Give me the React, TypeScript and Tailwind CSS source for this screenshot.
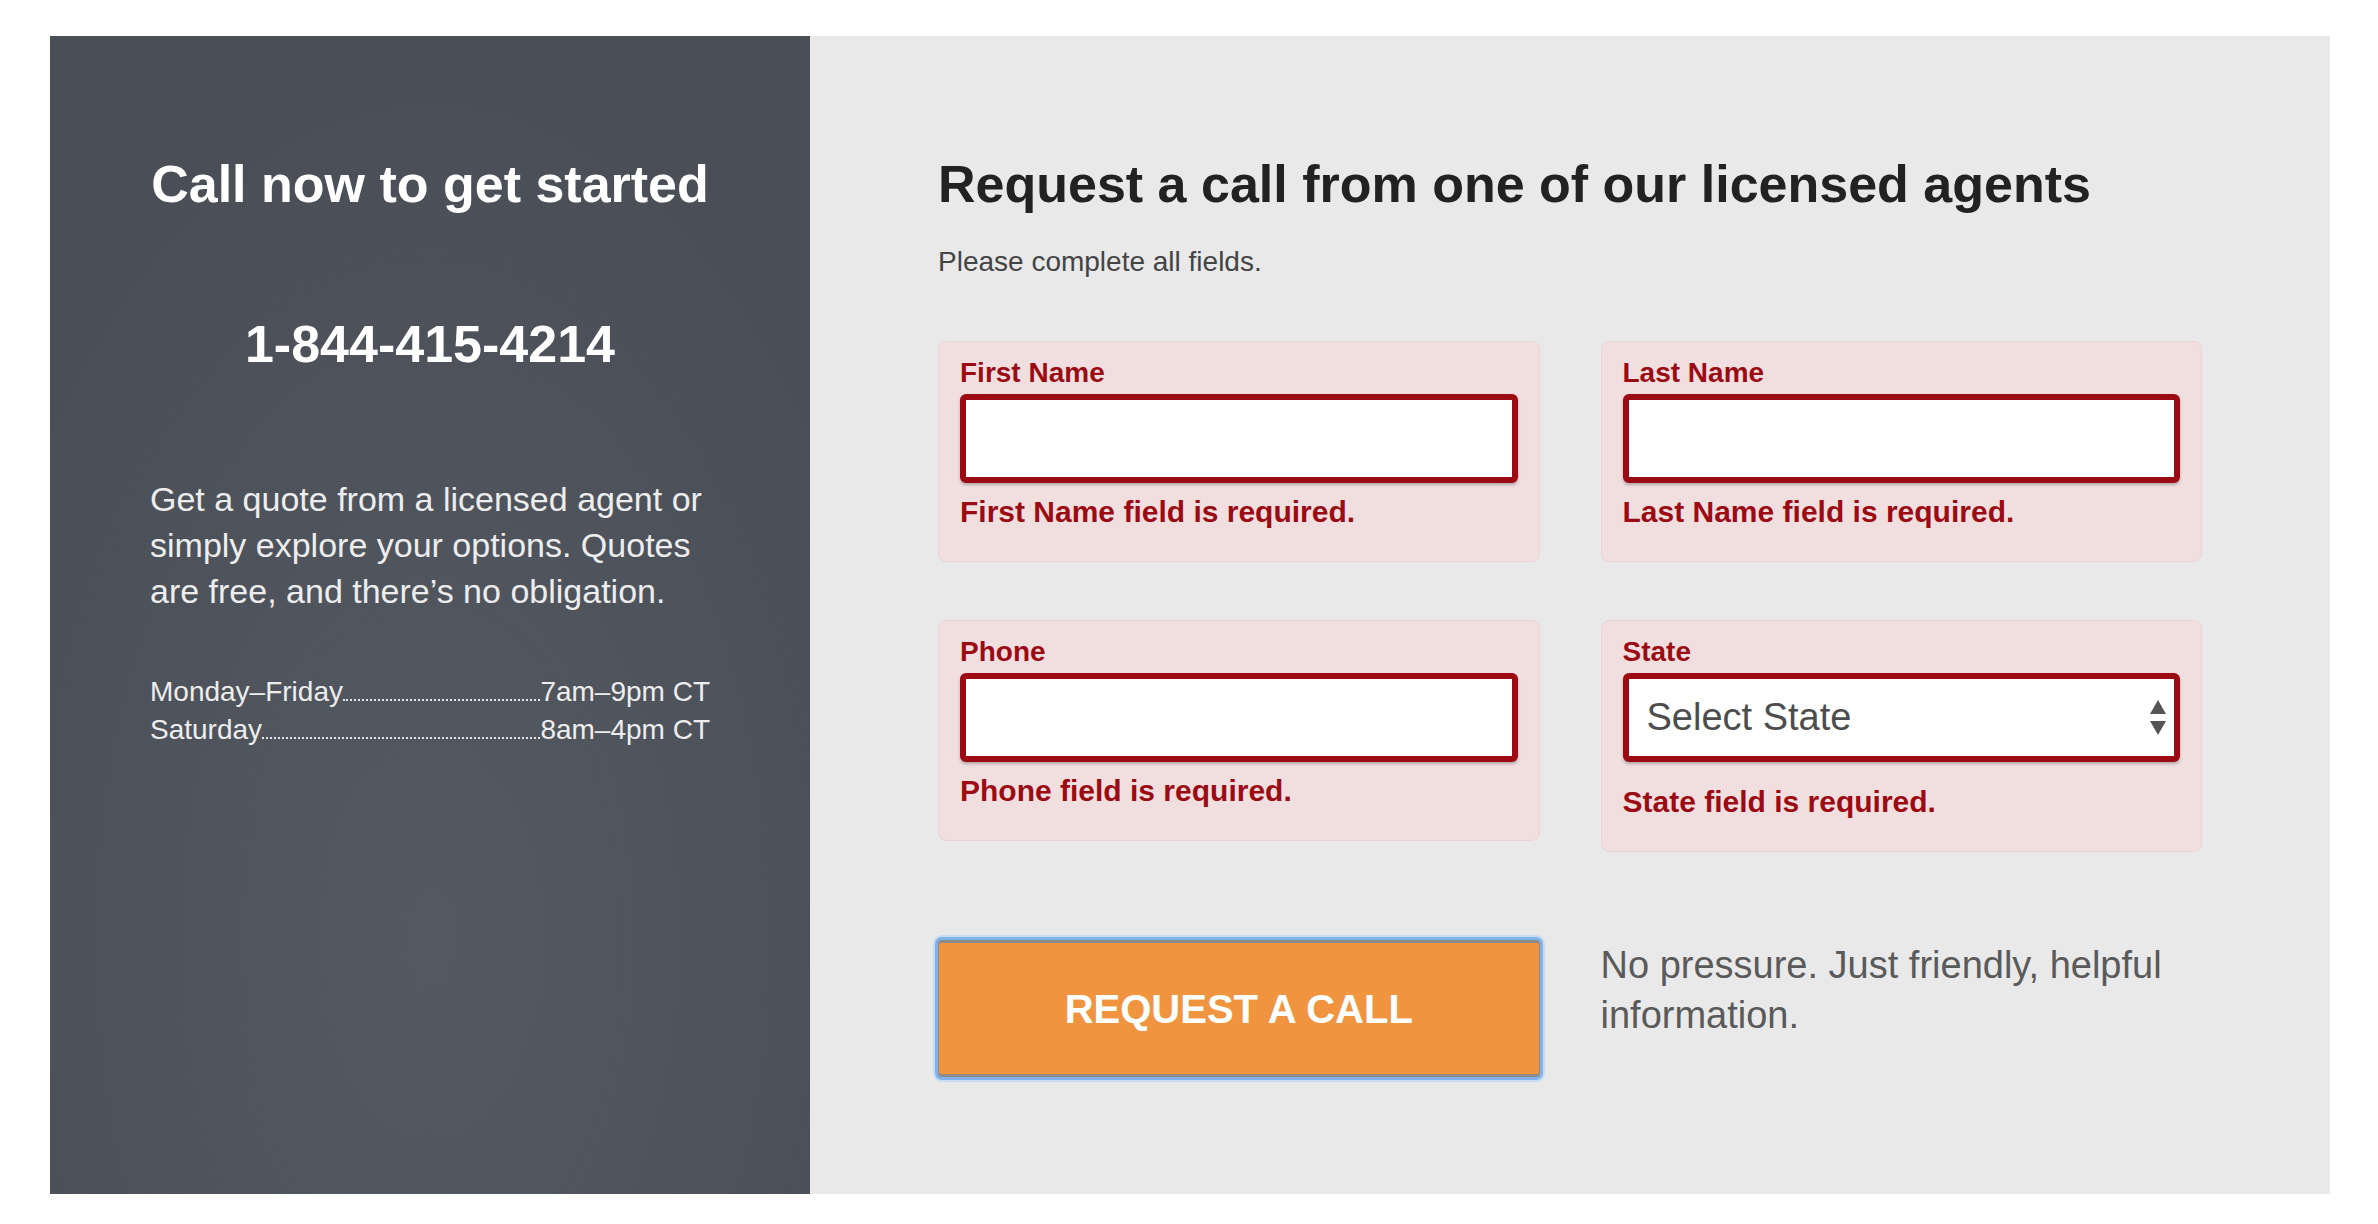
import React from 'react';

const errorRed = 'text-[#9c0b14]';

interface FieldProps {
  label: string;
  select?: boolean;
}

const Field: React.FC<FieldProps> = ({ label, select }) => {
  return (
    <div className="rounded-[8px] border border-[#ecd4d6] bg-[#f1dfe0] px-[21px] pt-[11px] pb-[30px]">
      <label className={`block text-[28px] font-bold leading-[40px] ${errorRed}`}>{label}</label>
      {select ? (
        <div className="relative mt-[1px]">
          <select
            className="block h-[89px] w-full appearance-none rounded-[6px] border-[6px] border-[#9c0b14] bg-white pl-[18px] text-[38px] text-[#4d4d4d] shadow-[0_2px_3px_rgba(0,0,0,0.25)] outline-none"
            defaultValue=""
          >
            <option value="">Select State</option>
          </select>
          {/* up / down arrows of the native select */}
          <svg className="pointer-events-none absolute right-[14px] top-[27px]" width="16" height="35" viewBox="0 0 16 35">
            <polygon points="8,0 16,14 0,14" fill="#555" />
            <polygon points="0,21 16,21 8,35" fill="#555" />
          </svg>
        </div>
      ) : (
        <input
          type="text"
          className="mt-[1px] block h-[89px] w-full rounded-[6px] border-[6px] border-[#9c0b14] bg-white shadow-[0_2px_3px_rgba(0,0,0,0.25)] outline-none"
        />
      )}
      <p className={`${select ? 'mt-[21px]' : 'mt-[10px]'} text-[30px] font-bold leading-[38px] ${errorRed}`}>
        {label} field is required.
      </p>
    </div>
  );
};

const HoursRow: React.FC<{ day: string; time: string }> = ({ day, time }) => (
  <div className="flex items-end leading-[38px]">
    <span>{day}</span>
    <span className="mb-[10px] flex-1 border-b-2 border-dotted border-[#e6e6e6]"></span>
    <span>{time}</span>
  </div>
);

const App: React.FC = () => {
  return (
    <div className="min-h-screen bg-white pt-[36px] font-['Liberation_Sans',Arial,sans-serif]">
      <div className="ml-[50px] flex w-[2280px]">
        {/* left: call info */}
        <div className="w-[760px] bg-[radial-gradient(ellipse_65%_75%_at_50%_78%,#545a62_0%,#4a4e57_100%)] px-[100px] pt-[118px]">
          <h2 className="text-center text-[52px] font-bold leading-[60px] text-white">Call now to get started</h2>
          <p className="mt-[100px] text-center text-[52px] font-bold leading-[60px] text-white">1-844-415-4214</p>
          <p className="mt-[102px] text-[34px] leading-[46px] text-[#ededed]">
            Get a quote from a licensed agent or simply explore your options. Quotes are free, and there’s no obligation.
          </p>
          <div className="mt-[59px] text-[28px] text-[#ededed]">
            <HoursRow day="Monday–Friday" time="7am–9pm CT" />
            <HoursRow day="Saturday" time="8am–4pm CT" />
          </div>
        </div>

        {/* right: request form */}
        <div className="flex-1 bg-[#e9e9e9] px-[128px] pt-[118px] pb-[117px]">
          <h1 className="text-[52px] font-bold leading-[60px] text-[#222]">Request a call from one of our licensed agents</h1>
          <p className="mt-[30px] text-[28px] leading-[36px] text-[#444]">Please complete all fields.</p>

          <div className="mt-[61px] grid grid-cols-2 items-start gap-x-[61px] gap-y-[58px]">
            <Field label="First Name" />
            <Field label="Last Name" />
            <Field label="Phone" />
            <Field label="State" select />
          </div>

          <div className="mt-[88px] grid grid-cols-2 items-start gap-x-[61px]">
            <button className="h-[137px] w-full rounded-[4px] border-x-[1px] border-y-[3px] border-[#8e8b88] bg-[#f0943f] text-[40px] font-bold text-white shadow-[0_0_0_3px_#80b2ec,0_0_0_5px_#c7dcf1]">
              REQUEST A CALL
            </button>
            <p className="text-[38px] leading-[50px] text-[#5a5a5a]">No pressure. Just friendly, helpful information.</p>
          </div>
        </div>
      </div>
    </div>
  );
};

export default App;
